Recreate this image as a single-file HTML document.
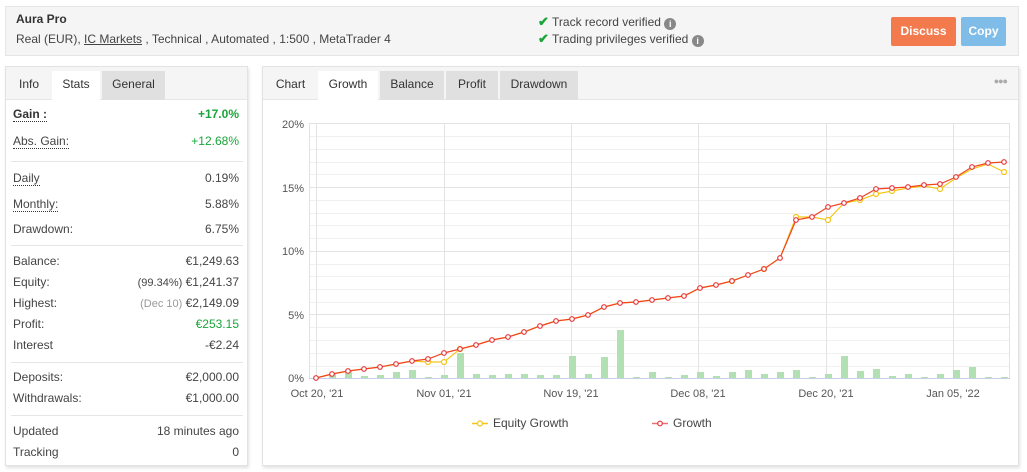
<!DOCTYPE html>
<html><head><meta charset="utf-8"><style>
*{box-sizing:border-box;margin:0;padding:0}
body{width:1027px;height:472px;background:#fff;font-family:"Liberation Sans",sans-serif;font-size:12px;color:#333;position:relative;overflow:hidden}
.abs{position:absolute}
.hdr{left:5px;top:6px;width:1014px;height:50px;background:#f5f5f5;border:1px solid #e6e6e6}
.btn{position:absolute;top:17px;height:29px;color:#fff;font-weight:bold;font-size:12px;line-height:29px;text-align:center;border-radius:2px}
.panel{background:#fff;border:1px solid #e3e3e3;box-shadow:1px 2px 3px rgba(0,0,0,.12)}
.tabbar{position:absolute;left:0;top:0;right:0;height:33px;background:#f5f5f5;border-bottom:1px solid #e6e6e6}
.tab{position:absolute;top:4px;height:29px;line-height:27px;text-align:center;font-size:12px;color:#333}
.row{position:absolute;left:7px;width:226px;font-size:12px;color:#444}
.row .r{position:absolute;right:0;top:0}
.dl{border-bottom:1px dotted #333}
.div{position:absolute;left:5px;width:232px;height:1px;background:#e6e6e6}
.g{color:#1aa53a}
.ic{display:inline-block;width:12px;height:12px;border-radius:6px;background:#888;color:#fff;font-size:9px;line-height:12px;text-align:center;font-weight:bold;vertical-align:-1px}
</style></head><body>
<div class="abs hdr"></div>
<div class="abs" style="left:16px;top:12px;font-weight:bold;font-size:12px;color:#333">Aura Pro</div>
<div class="abs" style="left:16px;top:32px;font-size:12px;color:#444">Real (EUR), <span style="text-decoration:underline">IC Markets</span> , Technical , Automated , 1:500 , MetaTrader 4</div>
<div class="abs" style="left:538px;top:14px;font-size:12px;color:#444"><span style="color:#1aa53a;font-weight:bold;font-size:13px">✔</span> Track record verified <span class="ic">i</span></div>
<div class="abs" style="left:538px;top:31px;font-size:12px;color:#444"><span style="color:#1aa53a;font-weight:bold;font-size:13px">✔</span> Trading privileges verified <span class="ic">i</span></div>
<div class="btn" style="left:891px;width:65px;background:#f27a4c">Discuss</div>
<div class="btn" style="left:961px;width:45px;background:#7fbde8">Copy</div>

<div class="abs panel" style="left:5px;top:66px;width:243px;height:400px">
 <div class="tabbar"></div>
 <div class="tab" style="left:0;width:46px">Info</div>
 <div class="tab" style="left:46px;width:48px;background:#fff;height:30px">Stats</div>
 <div class="tab" style="left:96px;width:63px;background:#e0e0e0">General</div>
 <div class="row" style="top:40px"><span class="dl" style="font-weight:bold;color:#333">Gain :</span><span class="r g" style="font-weight:bold">+17.0%</span></div>
 <div class="row" style="top:67px"><span class="dl">Abs. Gain:</span><span class="r g">+12.68%</span></div>
 <div class="div" style="top:94px"></div>
 <div class="row" style="top:104px"><span class="dl">Daily</span><span class="r">0.19%</span></div>
 <div class="row" style="top:130px"><span class="dl">Monthly:</span><span class="r">5.88%</span></div>
 <div class="row" style="top:155px">Drawdown:<span class="r">6.75%</span></div>
 <div class="div" style="top:178px"></div>
 <div class="row" style="top:187px">Balance:<span class="r">€1,249.63</span></div>
 <div class="row" style="top:208px">Equity:<span class="r"><span style="font-size:11px">(99.34%)</span> €1,241.37</span></div>
 <div class="row" style="top:229px">Highest:<span class="r"><span style="font-size:11px;color:#999">(Dec 10)</span> €2,149.09</span></div>
 <div class="row" style="top:250px">Profit:<span class="r g">€253.15</span></div>
 <div class="row" style="top:271px">Interest<span class="r">-€2.24</span></div>
 <div class="div" style="top:295px"></div>
 <div class="row" style="top:303px">Deposits:<span class="r">€2,000.00</span></div>
 <div class="row" style="top:324px">Withdrawals:<span class="r">€1,000.00</span></div>
 <div class="div" style="top:348px"></div>
 <div class="row" style="top:357px">Updated<span class="r">18 minutes ago</span></div>
 <div class="row" style="top:378px">Tracking<span class="r">0</span></div>
</div>

<div class="abs panel" style="left:262px;top:66px;width:757px;height:400px">
 <div class="tabbar"></div>
 <div class="tab" style="left:0;width:55px">Chart</div>
 <div class="tab" style="left:55px;width:60px;background:#fff;height:30px">Growth</div>
 <div class="tab" style="left:117px;width:64px;background:#e0e0e0">Balance</div>
 <div class="tab" style="left:183px;width:52px;background:#e0e0e0">Profit</div>
 <div class="tab" style="left:237px;width:78px;background:#e0e0e0">Drawdown</div>
 <div class="abs" style="right:11px;top:9px;color:#aaa;font-size:9px;letter-spacing:-1px">●●●</div>
</div>

<svg class="abs" style="left:0;top:0" width="1027" height="472" viewBox="0 0 1027 472">
 <g stroke="#f0f0f0" stroke-width="1">
  <line x1="309" y1="136.5" x2="1010" y2="136.5"/><line x1="309" y1="149.5" x2="1010" y2="149.5"/><line x1="309" y1="162.5" x2="1010" y2="162.5"/><line x1="309" y1="174.5" x2="1010" y2="174.5"/>
  <line x1="309" y1="200.5" x2="1010" y2="200.5"/><line x1="309" y1="213.5" x2="1010" y2="213.5"/><line x1="309" y1="225.5" x2="1010" y2="225.5"/><line x1="309" y1="238.5" x2="1010" y2="238.5"/>
  <line x1="309" y1="264.5" x2="1010" y2="264.5"/><line x1="309" y1="276.5" x2="1010" y2="276.5"/><line x1="309" y1="289.5" x2="1010" y2="289.5"/><line x1="309" y1="302.5" x2="1010" y2="302.5"/>
  <line x1="309" y1="327.5" x2="1010" y2="327.5"/><line x1="309" y1="340.5" x2="1010" y2="340.5"/><line x1="309" y1="353.5" x2="1010" y2="353.5"/><line x1="309" y1="366.5" x2="1010" y2="366.5"/>
 </g>
 <g stroke="#e3e3e3" stroke-width="1">
  <line x1="309" y1="123.5" x2="1010" y2="123.5"/><line x1="309" y1="187.5" x2="1010" y2="187.5"/><line x1="309" y1="251.5" x2="1010" y2="251.5"/><line x1="309" y1="314.5" x2="1010" y2="314.5"/>
  <line x1="309.5" y1="123" x2="309.5" y2="378"/><line x1="316.5" y1="123" x2="316.5" y2="378"/><line x1="444.5" y1="123" x2="444.5" y2="378"/><line x1="571.5" y1="123" x2="571.5" y2="378"/><line x1="698.5" y1="123" x2="698.5" y2="378"/><line x1="826.5" y1="123" x2="826.5" y2="378"/><line x1="953.5" y1="123" x2="953.5" y2="378"/><line x1="1009.5" y1="123" x2="1009.5" y2="378"/>
 </g>
 <g fill="#b3e0b3">
  <rect x="329" y="374" width="7" height="4"/><rect x="345" y="371" width="7" height="7"/><rect x="361" y="376" width="7" height="2"/><rect x="377" y="375" width="7" height="3"/><rect x="393" y="372" width="7" height="6"/><rect x="409" y="370" width="7" height="8"/><rect x="425" y="377" width="7" height="1"/><rect x="441" y="375" width="7" height="3"/><rect x="457" y="353" width="7" height="25"/><rect x="473" y="374" width="7" height="4"/><rect x="489" y="375" width="7" height="3"/><rect x="505" y="374" width="7" height="4"/><rect x="521" y="374" width="7" height="4"/><rect x="537" y="375" width="7" height="3"/><rect x="553" y="375" width="7" height="3"/><rect x="569" y="356" width="7" height="22"/><rect x="585" y="374" width="7" height="4"/><rect x="601" y="357" width="7" height="21"/><rect x="617" y="330" width="7" height="48"/><rect x="633" y="377" width="7" height="1"/><rect x="649" y="372" width="7" height="6"/><rect x="665" y="377" width="7" height="1"/><rect x="681" y="375" width="7" height="3"/><rect x="697" y="372" width="7" height="6"/><rect x="713" y="376" width="7" height="2"/><rect x="729" y="372" width="7" height="6"/><rect x="745" y="370" width="7" height="8"/><rect x="761" y="374" width="7" height="4"/><rect x="777" y="372" width="7" height="6"/><rect x="793" y="370" width="7" height="8"/><rect x="809" y="377" width="7" height="1"/><rect x="825" y="374" width="7" height="4"/><rect x="841" y="356" width="7" height="22"/><rect x="857" y="371" width="7" height="7"/><rect x="873" y="369" width="7" height="9"/><rect x="889" y="376" width="7" height="2"/><rect x="905" y="374" width="7" height="4"/><rect x="921" y="377" width="7" height="1"/><rect x="937" y="374" width="7" height="4"/><rect x="953" y="370" width="7" height="8"/><rect x="969" y="367" width="7" height="11"/><rect x="985" y="377" width="7" height="1"/><rect x="1001" y="377" width="7" height="1"/>
 </g>
 <line x1="309" y1="378.5" x2="1010" y2="378.5" stroke="#c5d0e8"/>
 <polyline fill="none" stroke="#f5c518" stroke-width="1.2" points="316,378 332,374 348,371 364,369 380,367 396,364 412,361 428,362 444,362 460,349 476,345 492,340 508,337 524,332 540,326 556,321 572,319 588,315 604,307 620,303 636,302 652,300 668,298 684,296 700,288 716,285 732,281 748,275 764,269 780,258 796,217 812,217 828,220 844,203 860,200 876,194 892,191 908,188 924,186 940,189 956,178 972,169 988,164 1004,172"/>
 <g fill="#fff" stroke="#f5c518" stroke-width="1.2">
  <circle cx="428" cy="362" r="2.5"/><circle cx="444" cy="362" r="2.5"/><circle cx="796" cy="217" r="2.5"/><circle cx="828" cy="220" r="2.5"/><circle cx="860" cy="200" r="2.5"/><circle cx="876" cy="194" r="2.5"/><circle cx="892" cy="191" r="2.5"/><circle cx="940" cy="189" r="2.5"/><circle cx="1004" cy="172" r="2.5"/><circle cx="732" cy="281" r="2.5"/><circle cx="764" cy="269" r="2.5"/><circle cx="460" cy="349" r="2.5"/>
 </g>
 <polyline fill="none" stroke="#f0451f" stroke-width="1.2" points="316,378 332,374 348,371 364,369 380,367 396,364 412,361 428,359 444,353 460,349 476,345 492,340 508,337 524,332 540,326 556,321 572,319 588,315 604,307 620,303 636,302 652,300 668,298 684,296 700,288 716,285 732,281 748,275 764,269 780,258 796,220 812,217 828,207 844,203 860,198 876,189 892,188 908,187 924,185 940,184 956,177 972,167 988,163 1004,162"/>
 <g fill="#fff" stroke="#e8363a" stroke-width="1.2">
  <circle cx="316" cy="378" r="2.3"/><circle cx="332" cy="374" r="2.3"/><circle cx="348" cy="371" r="2.3"/><circle cx="364" cy="369" r="2.3"/><circle cx="380" cy="367" r="2.3"/><circle cx="396" cy="364" r="2.3"/><circle cx="412" cy="361" r="2.3"/><circle cx="428" cy="359" r="2.3"/><circle cx="444" cy="353" r="2.3"/><circle cx="460" cy="349" r="2.3"/><circle cx="476" cy="345" r="2.3"/><circle cx="492" cy="340" r="2.3"/><circle cx="508" cy="337" r="2.3"/><circle cx="524" cy="332" r="2.3"/><circle cx="540" cy="326" r="2.3"/><circle cx="556" cy="321" r="2.3"/><circle cx="572" cy="319" r="2.3"/><circle cx="588" cy="315" r="2.3"/><circle cx="604" cy="307" r="2.3"/><circle cx="620" cy="303" r="2.3"/><circle cx="636" cy="302" r="2.3"/><circle cx="652" cy="300" r="2.3"/><circle cx="668" cy="298" r="2.3"/><circle cx="684" cy="296" r="2.3"/><circle cx="700" cy="288" r="2.3"/><circle cx="716" cy="285" r="2.3"/><circle cx="732" cy="281" r="2.3"/><circle cx="748" cy="275" r="2.3"/><circle cx="764" cy="269" r="2.3"/><circle cx="780" cy="258" r="2.3"/><circle cx="796" cy="220" r="2.3"/><circle cx="812" cy="217" r="2.3"/><circle cx="828" cy="207" r="2.3"/><circle cx="844" cy="203" r="2.3"/><circle cx="860" cy="198" r="2.3"/><circle cx="876" cy="189" r="2.3"/><circle cx="892" cy="188" r="2.3"/><circle cx="908" cy="187" r="2.3"/><circle cx="924" cy="185" r="2.3"/><circle cx="940" cy="184" r="2.3"/><circle cx="956" cy="177" r="2.3"/><circle cx="972" cy="167" r="2.3"/><circle cx="988" cy="163" r="2.3"/><circle cx="1004" cy="162" r="2.3"/>
 </g>
 <g font-family="Liberation Sans, sans-serif" font-size="11" fill="#555" text-anchor="end">
  <text x="304" y="128">20%</text><text x="304" y="192">15%</text><text x="304" y="255">10%</text><text x="304" y="319">5%</text><text x="304" y="382">0%</text>
 </g>
 <g font-family="Liberation Sans, sans-serif" font-size="11" fill="#555" text-anchor="middle">
  <text x="317" y="397">Oct 20, '21</text><text x="444" y="397">Nov 01, '21</text><text x="571" y="397">Nov 19, '21</text><text x="698" y="397">Dec 08, '21</text><text x="826" y="397">Dec 20, '21</text><text x="953" y="397">Jan 05, '22</text>
 </g>
 <line x1="472" y1="423.5" x2="488" y2="423.5" stroke="#f5c518" stroke-width="1.5"/><circle cx="480" cy="423.5" r="2.5" fill="#fff" stroke="#f5c518" stroke-width="1.2"/>
 <text x="493" y="427" font-family="Liberation Sans, sans-serif" font-size="12" fill="#444">Equity Growth</text>
 <line x1="652" y1="423.5" x2="668" y2="423.5" stroke="#f07070" stroke-width="1.5"/><circle cx="660" cy="423.5" r="2.3" fill="#fff" stroke="#e8363a" stroke-width="1.2"/>
 <text x="673" y="427" font-family="Liberation Sans, sans-serif" font-size="12" fill="#444">Growth</text>
</svg>
</body></html>
